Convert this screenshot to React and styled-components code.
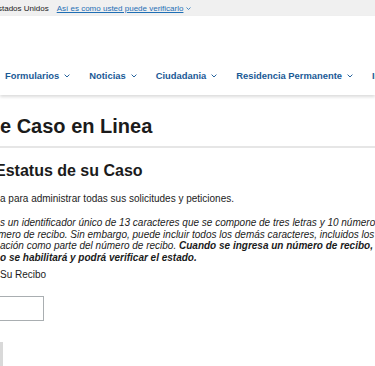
import React from "react";
import styled, { createGlobalStyle } from "styled-components";

const Global = createGlobalStyle`
  html, body { margin: 0; padding: 0; background: #fff; }
  body { width: 375px; height: 366px; overflow: hidden; font-family: "Liberation Sans", Arial, sans-serif; color: #1b1b1b; }
  * { box-sizing: border-box; }
`;

const Page = styled.div`
  width: 375px;
  overflow: hidden;
`;

const TopBar = styled.div`
  height: 16px;
  background: #f0f0f0;
  display: flex;
  align-items: center;
  font-size: 8px;
  white-space: nowrap;
`;

const TopText = styled.span`
  margin-left: -2px;
  color: #1b1b1b;
`;

const TopLink = styled.a`
  margin-left: 8px;
  color: #1f6fb5;
  text-decoration: underline;
  display: inline-flex;
  align-items: center;
  gap: 3px;
`;

const Header = styled.header`
  height: 79px;
  display: flex;
  align-items: flex-end;
  padding: 0 0 13px 5px;
  background: #fff;
  box-shadow: 0 2px 3px rgba(0, 0, 0, 0.14);
  position: relative;
`;

const NavList = styled.nav`
  display: flex;
  gap: 19px;
  white-space: nowrap;
`;

const NavItem = styled.span`
  display: inline-flex;
  align-items: center;
  gap: 5px;
  font-size: 9.4px;
  line-height: 12px;
  font-weight: 700;
  color: #1a5a96;
`;

const Chevron = ({ color = "#1a5a96", w = 6 }) => (
  <svg width={w} height={w * 0.6} viewBox="0 0 10 6" fill="none">
    <path d="M1 1l4 4 4-4" stroke={color} strokeWidth="1.6" />
  </svg>
);

const Main = styled.main`
  padding-top: 19px;
  white-space: nowrap;
`;

const TitleBlock = styled.div`
  padding-bottom: 8px;
  border-bottom: 2px solid #e6e6e6;
`;

const H1 = styled.h1`
  margin: 0;
  font-size: 20px;
  line-height: 24px;
  font-weight: 700;
  color: #1b1b1b;
`;

const H2 = styled.h2`
  margin: 13px 0 0 -5px;
  font-size: 16px;
  line-height: 20px;
  font-weight: 700;
`;

const Para = styled.p`
  margin: 12px 0 0;
  font-size: 10px;
  line-height: 12px;
`;

const Italic = styled.div`
  margin-top: 12px;
  font-size: 10px;
  line-height: 11.5px;
  font-style: italic;
`;

const Line = styled.div`
  margin-left: ${(p) => p.$shift || 0}px;
`;

const Label = styled.label`
  display: block;
  margin-top: 6px;
  font-size: 10px;
  line-height: 12px;
`;

const Input = styled.input`
  display: block;
  margin: 15px 0 0 -60px;
  width: 104px;
  height: 25px;
  border: 1px solid #a9aeb1;
  background: #fff;
`;

const Button = styled.button`
  display: block;
  margin: 21px 0 0 -80px;
  width: 83px;
  height: 30px;
  border: none;
  background: #d9d9d9;
`;

export default function App() {
  return (
    <Page>
      <Global />
      <TopBar>
        <TopText>stados Unidos</TopText>
        <TopLink>
          Así es como usted puede verificarlo <Chevron color="#1f6fb5" w={5} />
        </TopLink>
      </TopBar>
      <Header>
        <NavList>
          {["Formularios", "Noticias", "Ciudadania", "Residencia Permanente", "Inmigración"].map((t) => (
            <NavItem key={t}>
              {t} <Chevron />
            </NavItem>
          ))}
        </NavList>
      </Header>
      <Main>
        <TitleBlock>
          <H1>e Caso en Linea</H1>
        </TitleBlock>
        <H2>Estatus de su Caso</H2>
        <Para>a para administrar todas sus solicitudes y peticiones.</Para>
        <Italic>
          <Line>s un identificador único de 13 caracteres que se compone de tres letras y 10 números</Line>
          <Line $shift={-2}>mero de recibo. Sin embargo, puede incluir todos los demás caracteres, incluidos los asteriscos</Line>
          <Line>
            ación como parte del número de recibo. <b>Cuando se ingresa un número de recibo, el botón</b>
          </Line>
          <Line>
            <b>o se habilitará y podrá verificar el estado.</b>
          </Line>
        </Italic>
        <Label>Su Recibo</Label>
        <Input aria-label="Recibo" />
        <Button aria-label="Verificar" />
      </Main>
    </Page>
  );
}
